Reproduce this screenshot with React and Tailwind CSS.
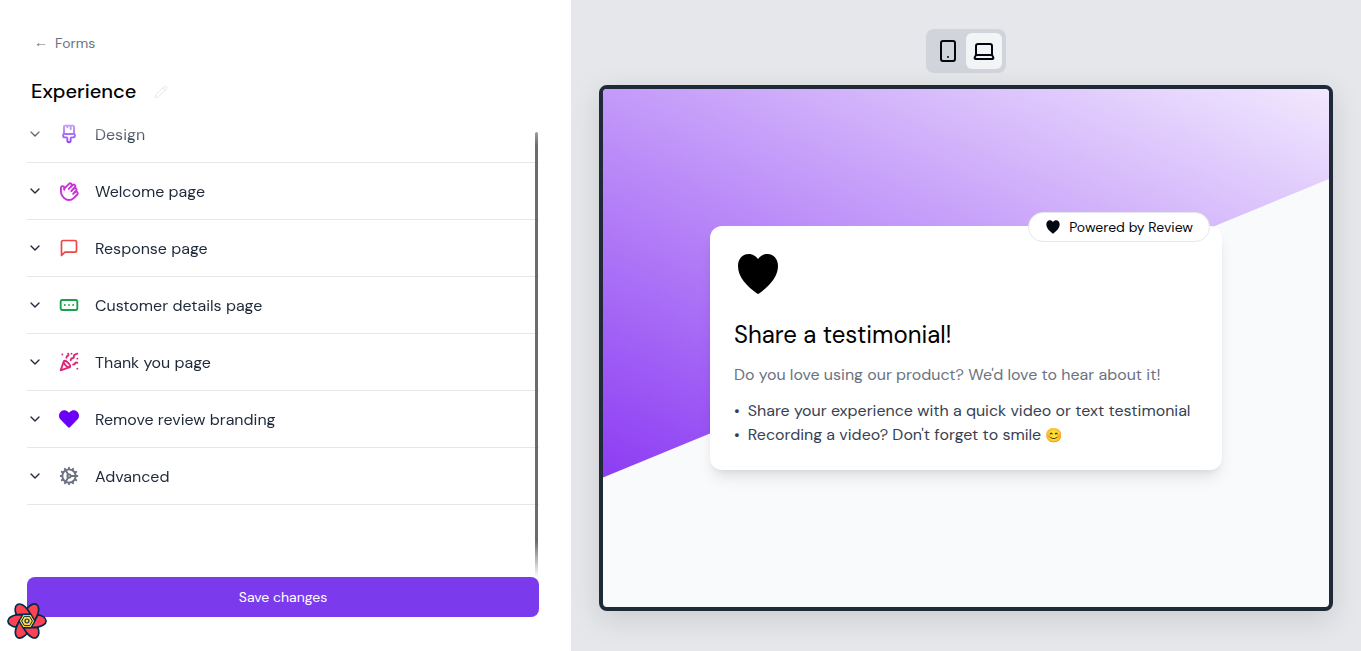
import {
  ChevronDown,
  Cog,
  Hand,
  Laptop,
  PaintbrushVertical,
  PartyPopper,
  Pencil,
  RectangleEllipsis,
  Smartphone,
} from 'lucide-react';
import { FaHeart } from 'react-icons/fa';

function MessageIcon({ className }) {
  return (
    <svg viewBox="0 0 24 24" className={className} fill="none" stroke="currentColor" strokeWidth="2" strokeLinecap="round" strokeLinejoin="round" aria-hidden="true">
      <path d="M21 15a2 2 0 0 1-2 2H7l-4 4V5a2 2 0 0 1 2-2h14a2 2 0 0 1 2 2z" />
    </svg>
  );
}

function HeartLogo({ className }) {
  return (
    <svg viewBox="0 0 48 48" className={className} fill="currentColor" aria-hidden="true">
      <path d="M24 9C26.5 5.6 30 4 33.5 4C39.8 4 44 9 44 16C44 27.5 34.5 36.5 25 43.6Q24 44.4 23 43.6C13.5 36.5 4 27.5 4 16C4 9 8.2 4 14.5 4C18 4 21.5 5.6 24 9Z" />
    </svg>
  );
}

const PETAL_ANGLES = [0, 60, 120, 180, 240, 300];

function FlowerLogo({ className }) {
  return (
    <svg viewBox="-20 -20 40 40" className={className} aria-hidden="true">
      {PETAL_ANGLES.map((angle) => (
        <path
          key={angle}
          transform={`rotate(${angle})`}
          d="M-3.8 -6.6L-9.5 -6.3C-15 -5.6 -19.1 -3 -19.1 0C-19.1 3.2 -15 5.7 -10.8 6.1L-7.6 0Z"
          fill="#ff4154"
          stroke="#002c4b"
          strokeWidth="1.7"
          strokeLinejoin="round"
        />
      ))}
      <path d="M-7.8 0L-3.9 -6.7H3.9L7.8 0L3.9 6.7H-3.9Z" fill="#ffd94c" stroke="#002c4b" strokeWidth="1.2" />
      <path d="M-5.4 0L-2.7 -4.6H2.7L5.4 0L2.7 4.6H-2.7Z" fill="none" stroke="#002c4b" strokeWidth="1" />
      <circle r="2" fill="#ffd94c" stroke="#002c4b" strokeWidth="1.2" />
    </svg>
  );
}

const sections = [
  { label: 'Design', icon: PaintbrushVertical, color: 'size-5 stroke-[2.25] text-[#8636f3]' },
  { label: 'Welcome page', icon: Hand, color: 'size-5 rotate-45 stroke-[2.25] text-[#c92fdb]' },
  { label: 'Response page', icon: MessageIcon, color: 'size-5 text-[#ef4444]' },
  { label: 'Customer details page', icon: RectangleEllipsis, color: 'size-5 stroke-[2.25] text-[#16a34a]' },
  { label: 'Thank you page', icon: PartyPopper, color: 'size-5 stroke-[2.25] text-[#db2777]' },
  { label: 'Remove review branding', icon: FaHeart, color: 'size-5 text-[#6a00f5]' },
  { label: 'Advanced', icon: Cog, color: 'size-5 stroke-[2.25] text-[#6b7280]' },
];

function Editor() {
  return (
    <section className="flex flex-col bg-white pt-[30px] pr-8 pb-[34px] pl-[27px]">
      <a href="#forms" className="flex items-center gap-[7px] self-start pl-[7px] text-sm leading-6 text-[#6b7280]">
        <span aria-hidden="true" className="pb-0.5 font-['Liberation_Sans',sans-serif]">←</span>
        Forms
      </a>
      <div className="mt-5 flex h-[30px] items-center gap-[18px] pl-1">
        <h1 className="text-xl font-medium text-black">Experience</h1>
        <button type="button" aria-label="Rename form" className="pt-0.5 text-gray-300">
          <Pencil className="size-3.5" strokeWidth={1} />
        </button>
      </div>
      <div className="relative flex-1 [mask-image:linear-gradient(to_bottom,transparent,black_40px,black_calc(100%-36px),transparent)]">
        <ul>
          {sections.map(({ label, icon: Icon, color }) => (
            <li key={label} className="border-b border-[#e5e7eb]">
              <button type="button" aria-expanded="false" className="flex h-14 w-full items-center gap-4 text-left text-base text-gray-800">
                <ChevronDown className="size-4" />
                <Icon className={color} />
                <span className="pt-0.5">{label}</span>
              </button>
            </li>
          ))}
        </ul>
        <div className="absolute top-[26px] right-px bottom-0 w-[3px] rounded-full bg-[#6b6b6b]" />
      </div>
      <button type="button" className="h-10 rounded-lg bg-[#7c3aed] text-sm text-white">
        Save changes
      </button>
    </section>
  );
}

function Preview() {
  return (
    <section className="flex flex-col bg-[#e5e7eb] px-7 pt-[29px] pb-10">
      <div className="flex self-center rounded-lg bg-[#d1d5db] p-1 text-gray-950">
        <button type="button" aria-label="Mobile preview" aria-pressed="false" className="flex size-9 items-center justify-center rounded-md">
          <Smartphone className="size-6" />
        </button>
        <button type="button" aria-label="Desktop preview" aria-pressed="true" className="flex size-9 items-center justify-center rounded-md bg-gray-100">
          <Laptop className="size-6" />
        </button>
      </div>
      <div className="relative mt-3 flex flex-1 flex-col items-center justify-center overflow-hidden rounded-lg border-4 border-[#1f2937] bg-gray-50 shadow-[0_8px_30px_rgba(0,0,0,0.12)]">
        <div className="absolute inset-x-0 top-0 h-3/4 bg-[linear-gradient(24deg,#8c3cf3,#f1e8fe)] [clip-path:polygon(0_0,100%_0,100%_90px,0_100%)]" />
        <article className="relative w-full max-w-lg rounded-xl bg-white px-6 pt-6 pb-[23px] shadow-lg">
          <div className="absolute -top-3.5 right-3 flex h-[30px] items-center gap-2 rounded-full border border-gray-200 bg-white px-4 text-sm text-gray-950">
            <HeartLogo className="size-4" />
            Powered by Review
          </div>
          <HeartLogo className="size-12 text-black" />
          <h2 className="mt-[21px] text-2xl text-black">Share a testimonial!</h2>
          <p className="mt-3 text-base text-[#6b7280]">Do you love using our product? We'd love to hear about it!</p>
          <ul className="mt-3 text-base text-[#374151]">
            <li className="flex gap-2"><span aria-hidden="true">•</span>Share your experience with a quick video or text testimonial</li>
            <li className="flex gap-2">
              <span aria-hidden="true">•</span>
              <span>Recording a video? Don't forget to smile <span className="text-sm">😊</span></span>
            </li>
          </ul>
        </article>
      </div>
    </section>
  );
}

export default function App() {
  return (
    <main className="grid min-h-screen grid-cols-[571fr_790fr] font-['DM_Sans',Inter,sans-serif]">
      <Editor />
      <Preview />
      <button type="button" aria-label="Open query tools" className="fixed bottom-2.5 left-[7px]">
        <FlowerLogo className="size-10" />
      </button>
    </main>
  );
}
